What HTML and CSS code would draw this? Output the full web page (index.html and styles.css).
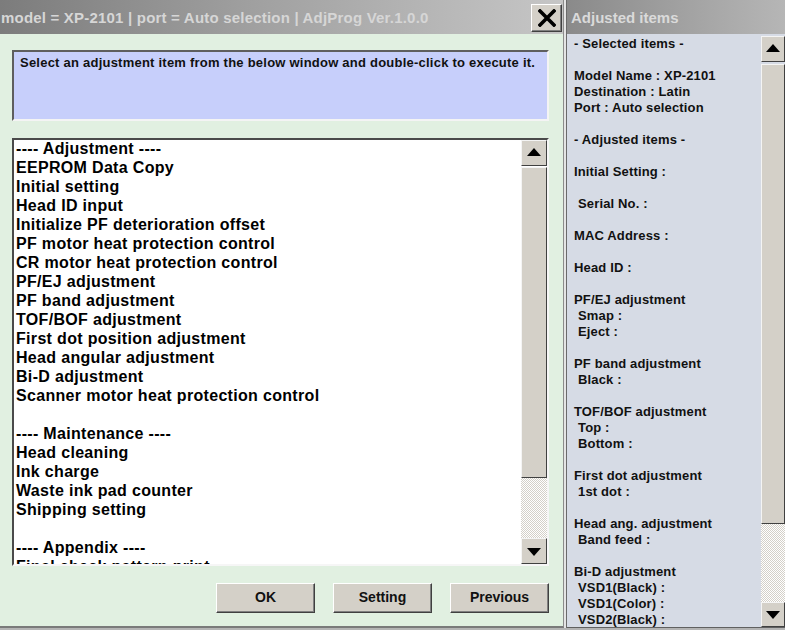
FILE: index.html
```html
<!DOCTYPE html>
<html>
<head>
<meta charset="utf-8">
<link rel="stylesheet" href="styles.css">
</head>
<body>
<div class="screen">
  <div class="win">
    <div class="titlebar">
      <span class="title">model = XP-2101 | port = Auto selection | AdjProg Ver.1.0.0</span>
      <button class="close" aria-label="Close">
        <svg width="18" height="18" viewBox="0 0 18 18"><path d="M2 2 L16 16 M16 2 L2 16" stroke="#000" stroke-width="3.6" stroke-linecap="square"/></svg>
      </button>
    </div>
    <div class="winbody">
      <div class="info">Select an adjustment item from the below window and double-click to execute it.</div>
      <div class="listbox">
        <div class="items">
          <div>---- Adjustment ----</div>
          <div>EEPROM Data Copy</div>
          <div>Initial setting</div>
          <div>Head ID input</div>
          <div>Initialize PF deterioration offset</div>
          <div>PF motor heat protection control</div>
          <div>CR motor heat protection control</div>
          <div>PF/EJ adjustment</div>
          <div>PF band adjustment</div>
          <div>TOF/BOF adjustment</div>
          <div>First dot position adjustment</div>
          <div>Head angular adjustment</div>
          <div>Bi-D adjustment</div>
          <div>Scanner motor heat protection control</div>
          <div>&nbsp;</div>
          <div>---- Maintenance ----</div>
          <div>Head cleaning</div>
          <div>Ink charge</div>
          <div>Waste ink pad counter</div>
          <div>Shipping setting</div>
          <div>&nbsp;</div>
          <div>---- Appendix ----</div>
          <div>Final check pattern print</div>
        </div>
        <div class="sbar sbar-list">
          <div class="sbtn"><span class="tri up"></span></div>
          <div class="thumb"></div>
          <div class="track"></div>
          <div class="sbtn"><span class="tri down"></span></div>
        </div>
      </div>
      <div class="buttons">
        <button class="btn">OK</button>
        <button class="btn">Setting</button>
        <button class="btn">Previous</button>
      </div>
    </div>
  </div>
  <div class="sep"></div>
  <div class="panel">
    <div class="ptitle">Adjusted items</div>
    <div class="pbody">
      <div class="ptext">
        <div>- Selected items -</div>
        <div>&nbsp;</div>
        <div>Model Name : XP-2101</div>
        <div>Destination : Latin</div>
        <div>Port : Auto selection</div>
        <div>&nbsp;</div>
        <div>- Adjusted items -</div>
        <div>&nbsp;</div>
        <div>Initial Setting :</div>
        <div>&nbsp;</div>
        <div class="ind">Serial No. :</div>
        <div>&nbsp;</div>
        <div>MAC Address :</div>
        <div>&nbsp;</div>
        <div>Head ID :</div>
        <div>&nbsp;</div>
        <div>PF/EJ adjustment</div>
        <div class="ind">Smap :</div>
        <div class="ind">Eject :</div>
        <div>&nbsp;</div>
        <div>PF band adjustment</div>
        <div class="ind">Black :</div>
        <div>&nbsp;</div>
        <div>TOF/BOF adjustment</div>
        <div class="ind">Top :</div>
        <div class="ind">Bottom :</div>
        <div>&nbsp;</div>
        <div>First dot adjustment</div>
        <div class="ind">1st dot :</div>
        <div>&nbsp;</div>
        <div>Head ang. adjustment</div>
        <div class="ind">Band feed :</div>
        <div>&nbsp;</div>
        <div>Bi-D adjustment</div>
        <div class="ind">VSD1(Black) :</div>
        <div class="ind">VSD1(Color) :</div>
        <div class="ind">VSD2(Black) :</div>
      </div>
      <div class="sbar sbar-panel">
        <div class="sbtn"><span class="tri up"></span></div>
        <div class="thumb"></div>
        <div class="track"></div>
        <div class="sbtn"><span class="tri down"></span></div>
      </div>
    </div>
  </div>
</div>
</body>
</html>
```
FILE: styles.css
```css
* { box-sizing: border-box; }
html, body { margin: 0; padding: 0; }
body {
  width: 785px;
  height: 630px;
  overflow: hidden;
  background: #b4b4b4;
  font-family: "Liberation Sans", Arial, sans-serif;
  font-weight: bold;
}
.screen {
  display: flex;
  width: 785px;
  height: 628px;
}
.win {
  width: 564px;
  height: 628px;
  display: flex;
  flex-direction: column;
  background: #e1f0e1;
  border-right: 1px solid #8c8c8c;
  border-bottom: 2px solid #7a7a7a;
}
.titlebar {
  height: 34px;
  flex: none;
  display: flex;
  align-items: center;
  justify-content: space-between;
  background: linear-gradient(to right, #7c7c7c, #a0a0a0 45%, #c6c6c6);
  padding: 0 1px 0 1px;
}
.title {
  color: #d6d6d6;
  font-size: 15px;
  letter-spacing: 0.2px;
  white-space: nowrap;
  margin-top: 1px;
}
.close {
  width: 31px;
  height: 28px;
  padding: 0;
  margin: 1px 0 0 0;
  display: flex;
  align-items: center;
  justify-content: center;
  background: #d4d0c8;
  border: 1px solid;
  border-color: #ffffff #404040 #404040 #ffffff;
  box-shadow: inset -1px -1px 0 #808080;
}
.winbody {
  flex: 1;
  display: flex;
  flex-direction: column;
  padding: 16px 14px 0 12px;
}
.info {
  height: 71px;
  background: #c7cffb;
  border: 2px solid;
  border-color: #5e5e5e #f4f4f4 #f4f4f4 #5e5e5e;
  font-size: 13px;
  letter-spacing: 0.23px;
  color: #111;
  padding: 3px 0 0 6px;
  white-space: nowrap;
}
.listbox {
  margin-top: 17px;
  height: 428px;
  display: flex;
  background: #fff;
  border: 2px solid;
  border-color: #4a4a4a #f6f6f6 #f6f6f6 #4a4a4a;
  overflow: hidden;
}
.items {
  flex: 1;
  font-size: 16px;
  letter-spacing: 0.32px;
  line-height: 19px;
  color: #000;
  padding: 0 0 0 2px;
  margin-top: -1px;
  white-space: nowrap;
  overflow: hidden;
}
.sbar {
  flex: none;
  display: flex;
  flex-direction: column;
}
.sbar-list { width: 26px; }
.sbar-list .sbtn { height: 26px; }
.sbar-list .thumb { margin-top: 1px; height: 311px; }
.sbar-list .track { flex: 1; }
.sbtn {
  flex: none;
  display: flex;
  align-items: center;
  justify-content: center;
  background: #d4d0c8;
  border: 1px solid;
  border-color: #f4f4f4 #404040 #404040 #f4f4f4;
}
.thumb {
  flex: none;
  background: #d4d0c8;
  border: 1px solid;
  border-color: #f4f4f4 #404040 #404040 #f4f4f4;
}
.track {
  background: repeating-conic-gradient(#d4d0c8 0 25%, #ffffff 0 50%) 0 0 / 2px 2px;
}
.tri {
  width: 0;
  height: 0;
  border-left: 7px solid transparent;
  border-right: 7px solid transparent;
}
.tri.up { border-bottom: 8px solid #000; margin-top: -2px; }
.tri.down { border-top: 8px solid #000; margin-top: 1px; }
.buttons {
  margin-top: 17px;
  display: flex;
  justify-content: flex-end;
  gap: 18px;
}
.btn {
  width: 99px;
  height: 30px;
  background: #d4d0c8;
  border: 1px solid;
  border-color: #ffffff #404040 #404040 #ffffff;
  box-shadow: inset -1px -1px 0 #808080;
  font-family: "Liberation Sans", Arial, sans-serif;
  font-weight: bold;
  font-size: 14px;
  color: #111;
  padding: 0 0 2px 0;
}
.sep {
  width: 3px;
  background: #e4e4e4;
  border-right: 1px solid #6a6a6a;
}
.panel {
  flex: 1;
  display: flex;
  flex-direction: column;
  height: 628px;
}
.ptitle {
  height: 34px;
  flex: none;
  background: linear-gradient(to right, #8a8a8a, #b6b6b6);
  color: #dadada;
  font-size: 15px;
  padding: 9px 0 0 4px;
  white-space: nowrap;
}
.pbody {
  flex: 1;
  display: flex;
  background: #d6dbe5;
  border-bottom: 1px solid #606060;
  overflow: hidden;
  padding-top: 2px;
}
.ptext {
  flex: 1;
  font-size: 13px;
  letter-spacing: 0.15px;
  line-height: 16px;
  color: #111;
  padding-left: 7px;
  white-space: nowrap;
  overflow: hidden;
}
.ptext .ind { padding-left: 4px; }
.sbar-panel { width: 24px; }
.sbar-panel .sbtn { height: 26px; }
.sbar-panel .thumb { margin-top: 2px; height: 460px; }
.sbar-panel .track { flex: 1; }
.sbar-panel .sbtn:last-child { height: 25px; }
```
